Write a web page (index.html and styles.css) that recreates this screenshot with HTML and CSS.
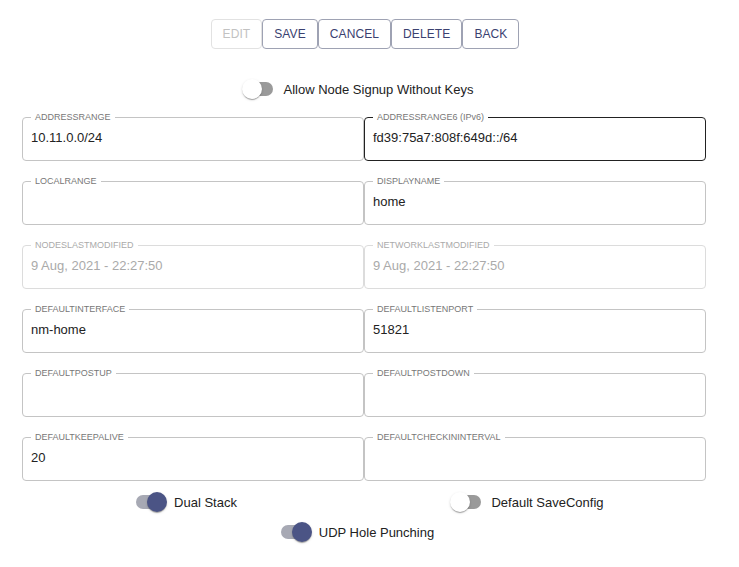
FILE: index.html
```html
<!DOCTYPE html>
<html>
<head>
<meta charset="utf-8">
<link rel="stylesheet" href="styles.css">
</head>
<body>
<div class="page">
  <div class="toolbar">
    <button class="btn disabled">EDIT</button>
    <button class="btn">SAVE</button>
    <button class="btn">CANCEL</button>
    <button class="btn">DELETE</button>
    <button class="btn">BACK</button>
  </div>

  <div class="switch-row top">
    <label class="sw-label"><span class="switch off"><span class="track"></span><span class="thumb"></span></span><span class="sw-text">Allow Node Signup Without Keys</span></label>
  </div>

  <div class="grid">
    <fieldset class="field"><legend>ADDRESSRANGE</legend><div class="value">10.11.0.0/24</div></fieldset>
    <fieldset class="field focused"><legend>ADDRESSRANGE6 (IPv6)</legend><div class="value">fd39:75a7:808f:649d::/64</div></fieldset>
    <fieldset class="field"><legend>LOCALRANGE</legend><div class="value"></div></fieldset>
    <fieldset class="field"><legend>DISPLAYNAME</legend><div class="value">home</div></fieldset>
    <fieldset class="field dis"><legend>NODESLASTMODIFIED</legend><div class="value">9 Aug, 2021 - 22:27:50</div></fieldset>
    <fieldset class="field dis"><legend>NETWORKLASTMODIFIED</legend><div class="value">9 Aug, 2021 - 22:27:50</div></fieldset>
    <fieldset class="field"><legend>DEFAULTINTERFACE</legend><div class="value">nm-home</div></fieldset>
    <fieldset class="field"><legend>DEFAULTLISTENPORT</legend><div class="value">51821</div></fieldset>
    <fieldset class="field"><legend>DEFAULTPOSTUP</legend><div class="value"></div></fieldset>
    <fieldset class="field"><legend>DEFAULTPOSTDOWN</legend><div class="value"></div></fieldset>
    <fieldset class="field"><legend>DEFAULTKEEPALIVE</legend><div class="value">20</div></fieldset>
    <fieldset class="field"><legend>DEFAULTCHECKININTERVAL</legend><div class="value"></div></fieldset>
  </div>

  <div class="bottom">
    <div class="cell"><label class="sw-label"><span class="switch on"><span class="track"></span><span class="thumb"></span></span><span class="sw-text">Dual Stack</span></label></div>
    <div class="cell"><label class="sw-label"><span class="switch off"><span class="track"></span><span class="thumb"></span></span><span class="sw-text">Default SaveConfig</span></label></div>
  </div>
  <div class="switch-row last">
    <label class="sw-label"><span class="switch on"><span class="track"></span><span class="thumb"></span></span><span class="sw-text">UDP Hole Punching</span></label>
  </div>
</div>
</body>
</html>
```

FILE: styles.css
```css
html, body {
  margin: 0;
  padding: 0;
  background: #fff;
}
body {
  font-family: "Liberation Sans", Arial, sans-serif;
  color: #222;
}
.page {
  width: 684px;
  margin-left: 22px;
  padding-top: 19px;
}
.toolbar {
  display: flex;
  justify-content: center;
  gap: 0;
  padding-left: 2px;
}
.btn {
  height: 30px;
  padding: 0 11px;
  border: 1px solid #9ea2b3;
  border-radius: 4px;
  background: #fff;
  color: #3a4170;
  font-family: "Liberation Sans", Arial, sans-serif;
  font-size: 12px;
  letter-spacing: 0.1px;
}
.btn.disabled {
  border-color: #e2e2e2;
  color: #c2c2c2;
}
.switch-row {
  display: flex;
  justify-content: center;
}
.switch-row.top {
  margin-top: 26px;
  padding-right: 12px;
}
.sw-label {
  display: inline-flex;
  align-items: center;
  height: 28px;
}
.switch {
  position: relative;
  width: 34px;
  height: 28px;
  margin-right: 7px;
}
.track {
  position: absolute;
  left: 3px;
  top: 7px;
  width: 28px;
  height: 14px;
  border-radius: 7px;
  background: #9a9a9a;
}
.switch.on .track {
  background: #a7a9b4;
}
.thumb {
  position: absolute;
  top: 4px;
  width: 20px;
  height: 20px;
  border-radius: 50%;
  background: #fff;
  box-shadow: 0 2px 1px -1px rgba(0,0,0,0.2), 0 1px 1px 0 rgba(0,0,0,0.14), 0 1px 3px 0 rgba(0,0,0,0.12);
}
.switch.off .thumb { left: 0; }
.switch.on .thumb { left: 14px; background: #4b5485; }
.sw-text {
  font-size: 13px;
  color: #222;
}
.grid {
  margin-top: 9px;
  display: grid;
  grid-template-columns: 342px 342px;
  row-gap: 15px;
}
.field {
  margin: 0;
  height: 49px;
  box-sizing: border-box;
  border: 1px solid #c4c4c4;
  border-radius: 4px;
  padding: 0 8px 0 8px;
  min-width: 0;
}
.field legend {
  font-size: 9px;
  color: #777;
  padding: 0 4px;
  margin-left: 0;
  line-height: 10px;
}
.field .value {
  font-size: 13px;
  height: 16px;
  line-height: 16px;
  margin-top: 8px;
  padding-left: 0;
}
.field.focused {
  border-color: #222;
}
.field.dis {
  border-color: #dcdcdc;
}
.field.dis .value, .field.dis legend {
  color: #aaa;
}
.bottom {
  display: grid;
  grid-template-columns: 342px 342px;
  margin-top: 7px;
}
.cell {
  display: flex;
  justify-content: center;
  padding-right: 16px;
}
.switch-row.last {
  margin-top: 2px;
  padding-right: 16px;
}
```
